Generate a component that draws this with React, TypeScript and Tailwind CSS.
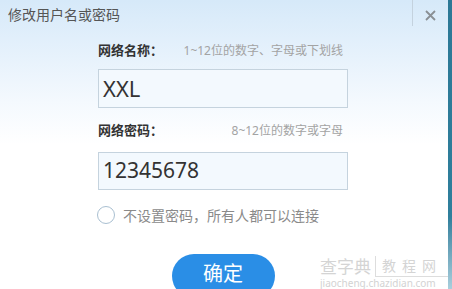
import React from "react";

export default function App() {
  const font = { fontFamily: '"Noto Sans", "Noto Sans CJK SC", sans-serif' };
  return (
    <div className="flex w-[452px] h-[289px] overflow-hidden bg-white" style={font}>
      <div className="relative flex-1 flex flex-col bg-gradient-to-b from-[#d6e9f9] via-[#f4f9fe] via-[35%] to-white to-[50%]">
        {/* header */}
        <div className="flex h-[30px] items-start">
          <div className="flex-1 pl-[8px] pt-[5px] text-[14px] leading-[20px] text-[#555]">修改用户名或密码</div>
          <div className="w-[36px] h-[26px] border-l border-[#c4d2de] flex items-center justify-center pt-[4px]">
            <svg width="11" height="11" viewBox="0 0 11 11">
              <path d="M1 1 L10 10 M10 1 L1 10" stroke="#8a8f94" strokeWidth="1.8" />
            </svg>
          </div>
        </div>
        {/* body */}
        <div className="flex flex-col pl-[98px] w-[348px]">
          <div className="mt-[15px] flex items-center justify-between pr-[5px] h-[20px]">
            <span className="text-[13px] font-bold text-[#333]">网络名称：</span>
            <span className="text-[12px] text-[#a3a3a3]">1~12位的数字、字母或下划线</span>
          </div>
          <div className="mt-[8px] h-[39px] border border-[#c5d3de] bg-[#f3f9fe] flex items-center pl-[4px] text-[22px] text-[#333]">
            XXL
          </div>
          <div className="mt-[13px] flex items-center justify-between pr-[5px] h-[20px]">
            <span className="text-[13px] font-bold text-[#333]">网络密码：</span>
            <span className="text-[12px] text-[#a3a3a3]">8~12位的数字或字母</span>
          </div>
          <div className="mt-[11px] h-[38px] border border-[#c5d3de] bg-[#f3f9fe] flex items-center pl-[4px] text-[21px] text-[#333]">
            12345678
          </div>
          <div className="mt-[15px] flex items-center h-[20px] -ml-[1px]">
            <span className="w-[18px] h-[18px] rounded-full border border-[#a9bfd1] bg-white" />
            <span className="ml-[8px] text-[14px] text-[#8a8a8a]">不设置密码，所有人都可以连接</span>
          </div>
          <div className="mt-[29px] flex justify-center">
            <div className="w-[103px] h-[44px] rounded-full bg-[#2a8ee6] text-white text-[20px] flex items-start justify-center pt-[5px]">
              确定
            </div>
          </div>
        </div>
        {/* watermark */}
        <div className="absolute left-[320px] top-[256px] flex flex-col opacity-60 pointer-events-none">
          <div className="flex items-center text-[#b9b9b9] text-[17px] leading-[20px]">
            <span>查字典</span>
            <span className="ml-[4px] border-l border-b border-[#c8c8c8] px-[6px] text-[14px] tracking-[6px]">教程网</span>
          </div>
          <div className="text-[10px] leading-[12px] text-[#b5b5b5]">jiaocheng.chazidian.com</div>
        </div>
      </div>
      <div className="w-[4px] bg-gradient-to-b from-[#2c7896] via-[#2f7f9c] via-[75%] to-[#a9cfdd]" />
    </div>
  );
}
